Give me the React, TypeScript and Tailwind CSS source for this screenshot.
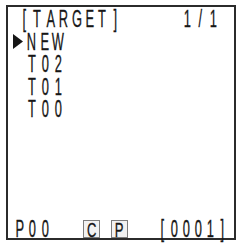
const font = { fontFamily: '"Liberation Sans", Arial, sans-serif' }

// LCD style text: every glyph sits in a fixed cell and is squeezed horizontally
function Lcd({ text, narrow = false }: { text: string; narrow?: boolean }) {
  return (
    <span className="flex">
      {text.split('').map((ch, i) => (
        <span key={i} className={`flex justify-center ${narrow ? 'w-[12px]' : 'w-[13px]'}`}>
          <span className="inline-block scale-x-[0.56]">{ch}</span>
        </span>
      ))}
    </span>
  )
}

// boxed indicator letter on the status row (C / P)
function Flag({ ch }: { ch: string }) {
  return (
    <span className="flex h-[18px] w-[17px] items-center justify-center border border-[#7d7d7d] bg-[#f2f2f2] text-[21px] leading-none">
      <span className="inline-block scale-x-[0.62]">{ch}</span>
    </span>
  )
}

export default function App() {
  const items = ['NEW', 'T02', 'T01', 'T00']
  const selected = 0

  return (
    <div className="h-[243px] w-[240px] bg-white pl-[6px] pt-[5px]" style={font}>
      <div className="flex h-[235px] w-[230px] flex-col justify-between border-2 border-[#2b2b2b] text-[23px] text-[#161616] [-webkit-text-stroke:0.3px_#161616]">
        <div className="pt-[1px] leading-[22.5px]">
          <div className="flex justify-between pl-[10px] pr-[14px]">
            <Lcd text="[TARGET]" />
            <Lcd text="1/1" />
          </div>
          {items.map((name, i) => (
            <div key={name} className="flex items-center">
              <span className="flex w-[17px] pl-[5px]">
                {i === selected ? (
                  <svg width="10" height="15" viewBox="0 0 10 15">
                    <path d="M0 0 L10 7.5 L0 15 Z" fill="#161616" />
                  </svg>
                ) : null}
              </span>
              <span className={i === selected ? '' : 'pl-[1px]'}>
                <Lcd text={name} />
              </span>
            </div>
          ))}
        </div>
        <div className="flex items-center pl-[5px] pr-[6px] leading-[18px]">
          <Lcd text="P00" />
          <span className="ml-[31px] flex gap-[11px]">
            <Flag ch="C" />
            <Flag ch="P" />
          </span>
          <span className="ml-auto">
            <Lcd text="[0001]" narrow />
          </span>
        </div>
      </div>
    </div>
  )
}
